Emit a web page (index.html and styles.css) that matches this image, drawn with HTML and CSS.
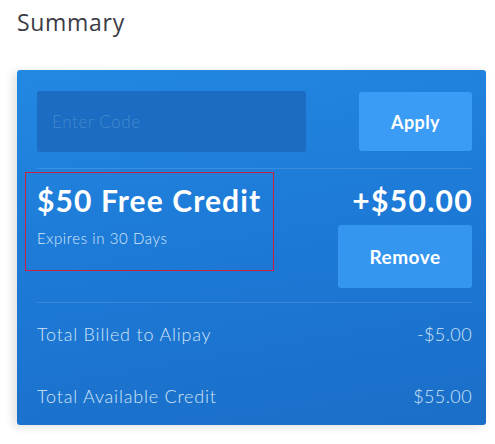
FILE: index.html
```html
<!DOCTYPE html>
<html>
<head>
<meta charset="utf-8">
<link rel="stylesheet" href="styles.css">
</head>
<body>
<h2 class="title">Summary</h2>
<div class="card">
  <div class="code-row">
    <div class="code-input">Enter Code</div>
    <button class="btn btn-apply">Apply</button>
  </div>
  <div class="credit-row">
    <div class="credit-info">
      <div class="credit-name">$50 Free Credit</div>
      <div class="credit-exp">Expires in 30 Days</div>
    </div>
    <div class="credit-side">
      <div class="credit-amount">+$50.00</div>
      <button class="btn btn-remove">Remove</button>
    </div>
    <div class="highlight"></div>
  </div>
  <div class="totals">
    <div class="total-row"><span>Total Billed to Alipay</span><span>-$5.00</span></div>
    <div class="total-row"><span>Total Available Credit</span><span>$55.00</span></div>
  </div>
</div>
</body>
</html>
```
FILE: styles.css
```css
* { box-sizing: border-box; }
body {
  margin: 0;
  padding: 7px 0 0 17px;
  background: #fff;
  font-family: "Lato", "Open Sans", sans-serif;
  width: 495px;
  height: 444px;
  overflow: hidden;
}
.title {
  margin: 0;
  font-family: "Open Sans", sans-serif;
  font-weight: 500;
  font-size: 23px;
  line-height: 30px;
  letter-spacing: 0.7px;
  color: #3b3b45;
}
.card {
  margin-top: 33px;
  width: 469px;
  height: 355px;
  border-radius: 3px;
  background: linear-gradient(170deg, #2288e2 0%, #1d79d6 50%, #1a6ec7 100%);
  box-shadow: -4px 2px 10px rgba(0,0,0,0.12);
  padding: 21px 14px 0 20px;
  color: #fff;
}
.code-row {
  display: flex;
  justify-content: space-between;
  align-items: center;
  padding-bottom: 16px;
  border-bottom: 1px solid rgba(255,255,255,0.12);
}
.code-input {
  width: 269px;
  height: 61px;
  background: #1b6cc2;
  border-radius: 3px;
  color: #4289cd;
  font-size: 17px;
  font-weight: 300;
  letter-spacing: 0.6px;
  padding: 0 15px;
  display: flex;
  align-items: center;
}
.btn {
  border: 0;
  border-radius: 3px;
  color: #fff;
  font-family: "Lato", sans-serif;
  font-weight: 700;
  font-size: 18px;
  cursor: pointer;
}
.btn-apply {
  width: 113px;
  height: 59px;
  background: #3a9cf4;
  letter-spacing: 0.4px;
}
.credit-row {
  position: relative;
  display: flex;
  justify-content: space-between;
  padding: 14px 0 14px 0;
  border-bottom: 1px solid rgba(255,255,255,0.12);
}
.credit-name {
  font-family: "Lato", sans-serif;
  font-weight: 700;
  font-size: 30px;
  line-height: 34px;
  letter-spacing: 1.1px;
}
.credit-exp {
  margin-top: 12px;
  font-size: 15px;
  font-weight: 300;
  letter-spacing: 0.6px;
  color: #d6e7f9;
}
.credit-side {
  display: flex;
  flex-direction: column;
  align-items: flex-end;
}
.credit-amount {
  font-weight: 700;
  font-size: 30px;
  line-height: 34px;
  letter-spacing: 1.3px;
  margin-right: -1px;
}
.btn-remove {
  margin-top: 8px;
  width: 134px;
  height: 63px;
  background: #3596f0;
  font-size: 19px;
  letter-spacing: 0.5px;
}
.highlight {
  position: absolute;
  left: -12px;
  top: 3px;
  width: 249px;
  height: 99px;
  border: 1.5px solid #c8233a;
}
.totals { padding-top: 0; }
.total-row {
  display: flex;
  justify-content: space-between;
  height: 62px;
  align-items: center;
  font-size: 18px;
  font-weight: 300;
  color: #d2e4f7;
}
.total-row span:first-child { letter-spacing: 0.8px; }
.total-row span:last-child { letter-spacing: 0.4px; }
```
